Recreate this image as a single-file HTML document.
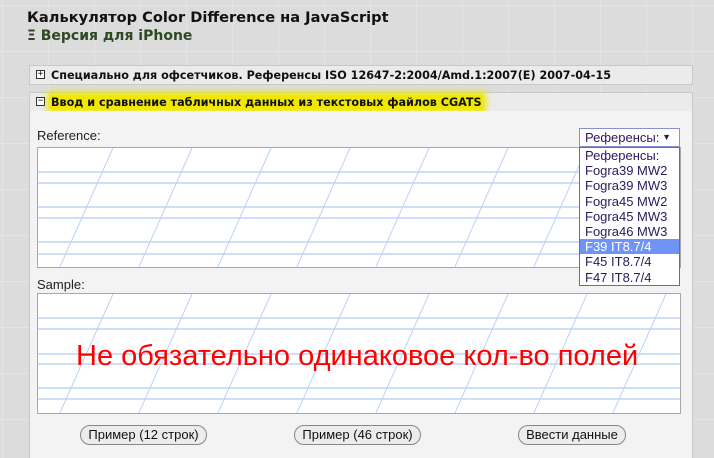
<!DOCTYPE html>
<html><head><meta charset="utf-8"><style>
*{margin:0;padding:0;box-sizing:border-box}
body{width:714px;height:458px;overflow:hidden;position:relative;font-family:"Liberation Sans",sans-serif;
background-color:#dcdcdc;
background-image:linear-gradient(#e4e4e4 1px,transparent 1px),linear-gradient(90deg,#e4e4e4 1px,transparent 1px);
background-size:46px 46px;background-position:2px 5px}
.a{position:absolute}
.t1{left:27px;top:9px;font:bold 14.6px "DejaVu Sans",sans-serif;color:#111}
.t2{left:27px;top:28px;font:bold 14px "DejaVu Sans",sans-serif;color:#2e4a22}
.hd{left:29px;width:664px;height:20px;background:#ebebeb;border:1px solid #c8c8c8;font:bold 11.2px "DejaVu Sans",sans-serif;color:#111;padding:3px 0 0 21px}
.bx{position:absolute;left:6px;top:4px;width:9px;height:9px;border:1px solid #333;background:#fff;font:9px/7px monospace;text-align:center}
.body{left:29px;top:111px;width:664px;height:347px;background:#f3f3f3;border-left:1px solid #c8c8c8;border-right:1px solid #c8c8c8}
.lbl{font-size:13px;color:#222}
.ta{left:37px;width:644px;height:121px;background:#fff;border:1px solid #a8a8a8;overflow:hidden}
.btn{top:425px;height:20px;border:1px solid #888;border-radius:10px;background:#ececec;font-size:13px;color:#111;text-align:center;line-height:18px}
.sel{left:579px;top:128px;width:101px;height:19px;border:1px solid #8890d0;background:#fff;font-size:13px;color:#2a1a5a;padding:1px 0 0 5px}
.dd{left:579px;top:147px;width:101px;height:139px;border:1px solid #6a6aa0;background:#fff;font-size:13px;color:#2a1a5a}
.dd div{height:15.2px;padding-left:5px;line-height:15px}
</style></head><body>
<div class="a t1">Калькулятор Color Difference на JavaScript</div>
<div class="a t2">Ξ Версия для iPhone</div>
<div class="a hd" style="top:65px"><span class="bx">+</span>Специально для офсетчиков. Референсы ISO 12647-2:2004/Amd.1:2007(E) 2007-04-15</div>
<div class="a hd" style="top:92px"><span class="bx">−</span><span style="background:#f0e800;box-shadow:0 0 6px 4px #f0e800;">Ввод и сравнение табличных данных из текстовых файлов CGATS</span></div>
<div class="a body"></div>
<div class="a lbl" style="left:37px;top:128px">Reference:</div>
<div class="a ta" style="top:147px"><svg width="644" height="121"><g stroke="#cfdff7" stroke-width="2"><line x1="0" y1="24" x2="644" y2="24"/><line x1="0" y1="35" x2="644" y2="35"/><line x1="0" y1="59" x2="644" y2="59"/><line x1="0" y1="70" x2="644" y2="70"/><line x1="0" y1="94" x2="644" y2="94"/><line x1="0" y1="106" x2="644" y2="106"/></g><g stroke="#bcd2f5" stroke-width="1"><line x1="75" y1="0" x2="21" y2="121"/><line x1="154" y1="0" x2="100" y2="121"/><line x1="233" y1="0" x2="179" y2="121"/><line x1="312" y1="0" x2="258" y2="121"/><line x1="391" y1="0" x2="337" y2="121"/><line x1="470" y1="0" x2="416" y2="121"/><line x1="549" y1="0" x2="495" y2="121"/><line x1="628" y1="0" x2="574" y2="121"/></g></svg></div>
<div class="a lbl" style="left:37px;top:277px">Sample:</div>
<div class="a ta" style="top:293px"><svg width="644" height="121"><g stroke="#cfdff7" stroke-width="2"><line x1="0" y1="24" x2="644" y2="24"/><line x1="0" y1="35" x2="644" y2="35"/><line x1="0" y1="60" x2="644" y2="60"/><line x1="0" y1="70" x2="644" y2="70"/><line x1="0" y1="94" x2="644" y2="94"/><line x1="0" y1="105" x2="644" y2="105"/></g><g stroke="#bcd2f5" stroke-width="1"><line x1="75" y1="0" x2="21" y2="121"/><line x1="154" y1="0" x2="100" y2="121"/><line x1="233" y1="0" x2="179" y2="121"/><line x1="312" y1="0" x2="258" y2="121"/><line x1="391" y1="0" x2="337" y2="121"/><line x1="470" y1="0" x2="416" y2="121"/><line x1="549" y1="0" x2="495" y2="121"/><line x1="628" y1="0" x2="574" y2="121"/></g></svg>
<div class="a" style="left:38px;top:46px;font-size:29px;color:#f00;white-space:nowrap">Не обязательно одинаковое кол-во полей</div></div>
<div class="a sel">Референсы:<span style="position:absolute;right:8px;top:3px;font-size:9px">▼</span></div>
<div class="a dd"><div>Референсы:</div><div>Fogra39 MW2</div><div>Fogra39 MW3</div><div>Fogra45 MW2</div><div>Fogra45 MW3</div><div>Fogra46 MW3</div><div style="background:#6f94f5;color:#fff">F39 IT8.7/4</div><div>F45 IT8.7/4</div><div>F47 IT8.7/4</div></div>
<div class="a btn" style="left:80px;width:127px">Пример (12 строк)</div>
<div class="a btn" style="left:294px;width:127px">Пример (46 строк)</div>
<div class="a btn" style="left:518px;width:108px">Ввести данные</div>
</body></html>
